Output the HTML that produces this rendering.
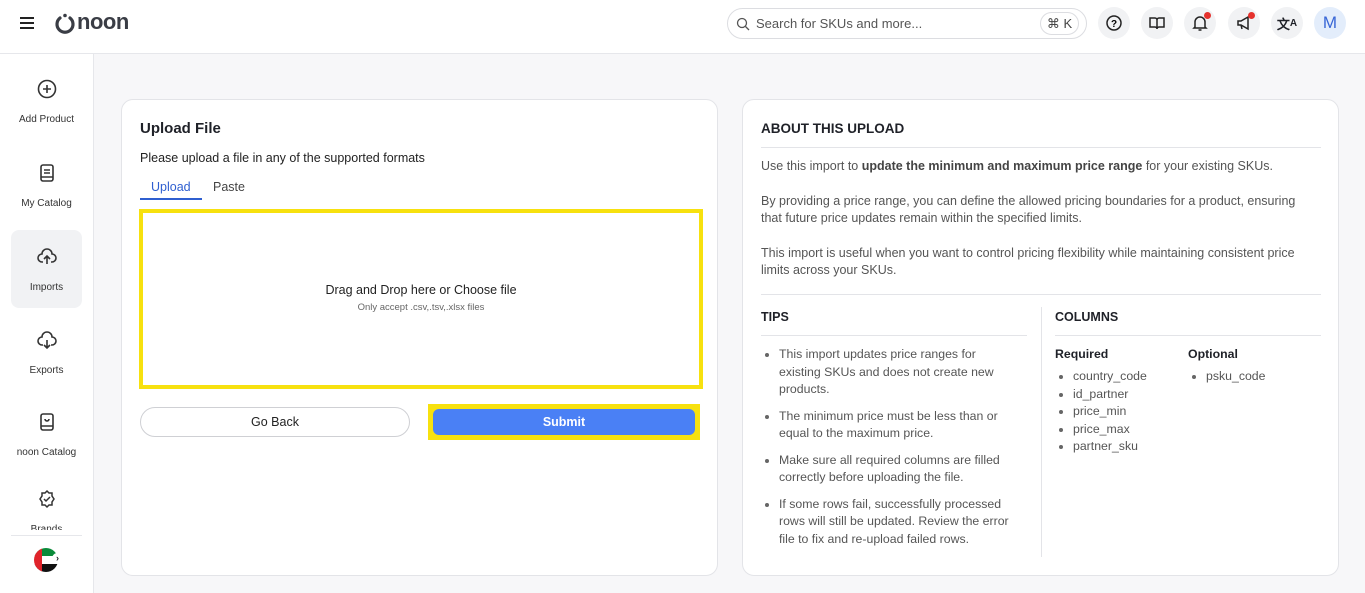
<!DOCTYPE html>
<html><head><meta charset="utf-8"><style>
*{box-sizing:border-box;margin:0;padding:0}
body{width:1365px;height:593px;overflow:hidden;font-family:"Liberation Sans",sans-serif;background:#f7f7f9;color:#1f2128;position:relative}
.a{position:absolute}
.hdr{left:0;top:0;width:1365px;height:54px;background:#fff;border-bottom:1px solid #e6e7eb}
.side{left:0;top:54px;width:94px;height:539px;background:#fff;border-right:1px solid #e6e7eb}
.nav{position:absolute;left:11px;width:71px;height:78px;text-align:center;font-size:10px;color:#333}
.nav svg{display:block;margin:0 auto 14px}
.card{background:#fff;border:1px solid #e3e4e8;border-radius:12px}
.ib{position:absolute;top:7px;width:32px;height:32px;border-radius:50%;background:#f1f2f4;display:flex;align-items:center;justify-content:center}
.dot{position:absolute;width:7px;height:7px;border-radius:50%;background:#e5322d;top:5px;right:5px}
p.t{font-size:12.5px;color:#555;line-height:17.5px}
ul{list-style:none}
li{position:relative;padding-left:18px;font-size:12.3px;color:#555;line-height:17.5px}
li:before{content:"";position:absolute;left:4px;top:7px;width:4px;height:4px;border-radius:50%;background:#666}
</style></head><body>
<div class="a hdr">
 <div class="a" style="left:20px;top:17px;width:14px">
  <div style="height:2px;background:#222;margin-bottom:3px"></div><div style="height:2px;background:#222;margin-bottom:3px"></div><div style="height:2px;background:#222"></div></div>
 <svg class="a" style="left:54px;top:13px" width="22" height="22" viewBox="0 0 22 22"><path d="M6 5 A8 8 0 1 0 16 5" fill="none" stroke="#3a3d45" stroke-width="3.2" stroke-linecap="round"/><circle cx="11" cy="2.5" r="1.8" fill="#3a3d45"/></svg>
 <div class="a" style="left:77px;top:9px;font-size:22px;font-weight:bold;color:#3a3d45;letter-spacing:-0.5px">noon</div>
 <div class="a" style="left:727px;top:8px;width:360px;height:31px;border:1px solid #dcdde1;border-radius:16px">
  <svg class="a" style="left:8px;top:8px" width="14" height="14" viewBox="0 0 14 14"><circle cx="6" cy="6" r="4.5" fill="none" stroke="#555" stroke-width="1.3"/><path d="M9.5 9.5 L13 13" stroke="#555" stroke-width="1.3"/></svg>
  <div class="a" style="left:28px;top:7px;font-size:13px;color:#555">Search for SKUs and more...</div>
  <div class="a" style="left:312px;top:3px;width:39px;height:23px;border:1px solid #dcdde1;border-radius:12px;font-size:13px;color:#444;text-align:center;line-height:21px">⌘ K</div>
 </div>
 <div class="ib" style="left:1098px"><svg width="18" height="18" viewBox="0 0 18 18"><circle cx="9" cy="9" r="7" fill="none" stroke="#222" stroke-width="1.5"/><text x="9" y="13" font-size="10" font-weight="bold" text-anchor="middle" font-family="Liberation Sans">?</text></svg></div>
 <div class="ib" style="left:1141px"><svg width="18" height="18" viewBox="0 0 18 18"><path d="M2 4h5a2 2 0 0 1 2 2v9a2 2 0 0 0-2-2H2zM16 4h-5a2 2 0 0 0-2 2v9a2 2 0 0 1 2-2h5z" fill="none" stroke="#222" stroke-width="1.5"/></svg></div>
 <div class="ib" style="left:1184px"><svg width="18" height="18" viewBox="0 0 18 18"><path d="M4 13V8a5 5 0 0 1 10 0v5l1 1H3zM7.5 16h3" fill="none" stroke="#222" stroke-width="1.5"/></svg><div class="dot"></div></div>
 <div class="ib" style="left:1228px"><svg width="18" height="18" viewBox="0 0 18 18"><path d="M3 7h3l7-4v12l-7-4H3zM6 11l1 4" fill="none" stroke="#222" stroke-width="1.5"/></svg><div class="dot"></div></div>
 <div class="ib" style="left:1271px;font-size:13px;font-weight:bold">文<span style="font-size:10px">A</span></div>
 <div class="ib" style="left:1314px;background:#e3edfb;color:#3866d6;font-size:17px">M</div>
</div>
<div class="a side">
 <div class="nav" style="top:24px"><svg width="22" height="22" viewBox="0 0 22 22"><circle cx="11" cy="11" r="8.5" fill="none" stroke="#333" stroke-width="1.6"/><path d="M11 7v8M7 11h8" stroke="#333" stroke-width="1.6"/></svg>Add Product</div>
 <div class="nav" style="top:108px"><svg width="22" height="22" viewBox="0 0 22 22"><rect x="5" y="3" width="12" height="16" rx="2" fill="none" stroke="#333" stroke-width="1.6"/><path d="M8 8h6M8 11h6M5 15h12" stroke="#333" stroke-width="1.6"/></svg>My Catalog</div>
 <div class="nav" style="top:176px;background:#f1f2f4;border-radius:8px;padding-top:16px"><svg width="22" height="22" viewBox="0 0 22 22"><path d="M7 16H6a4 4 0 0 1 0-8 5 5 0 0 1 10 0 4 4 0 0 1 0 8h-1M11 18v-8M8 13l3-3 3 3" fill="none" stroke="#333" stroke-width="1.6"/></svg>Imports</div>
 <div class="nav" style="top:275px"><svg width="22" height="22" viewBox="0 0 22 22"><path d="M7 16H6a4 4 0 0 1 0-8 5 5 0 0 1 10 0 4 4 0 0 1 0 8h-1M11 11v8M8 16l3 3 3-3" fill="none" stroke="#333" stroke-width="1.6"/></svg>Exports</div>
 <div class="nav" style="top:357px"><svg width="22" height="22" viewBox="0 0 22 22"><rect x="5" y="3" width="12" height="16" rx="2" fill="none" stroke="#333" stroke-width="1.6"/><path d="M5 15h12M9 8a2 2 0 1 0 4 0" fill="none" stroke="#333" stroke-width="1.6"/></svg>noon Catalog</div>
 <div class="nav" style="top:434px;height:42px;overflow:hidden"><svg width="22" height="22" viewBox="0 0 22 22"><path d="M11 3l2 2h3v3l2 3-2 3v3h-3l-2 2-2-2H6v-3l-2-3 2-3V5h3z" fill="none" stroke="#333" stroke-width="1.5"/><path d="M8 11l2 2 4-4" fill="none" stroke="#333" stroke-width="1.5"/></svg>Brands</div>
 <div class="a" style="left:11px;top:481px;width:71px;height:1px;background:#e6e7eb"></div>
 <div class="a" style="left:34px;top:494px;width:24px;height:24px;border-radius:50%;overflow:hidden;background:linear-gradient(#0a8a3a 0 33%,#fff 33% 66%,#111 66%)"><div style="width:8px;height:24px;background:#e0242b"></div></div>
 <div class="a" style="left:52px;top:499px;width:11px;height:11px;border-radius:50%;background:#fff;font-size:9px;line-height:11px;text-align:center;font-weight:bold">›</div>
</div>

<div class="a card" style="left:121px;top:99px;width:597px;height:477px">
 <div class="a" style="left:18px;top:20px;font-size:15px;font-weight:bold">Upload File</div>
 <div class="a" style="left:18px;top:51px;font-size:12.5px;color:#222">Please upload a file in any of the supported formats</div>
 <div class="a" style="left:29px;top:80px;font-size:12.5px;color:#2f5fd0">Upload</div>
 <div class="a" style="left:18px;top:98px;width:62px;height:2px;background:#2f5fd0"></div>
 <div class="a" style="left:91px;top:80px;font-size:12.5px;color:#444">Paste</div>
 <div class="a" style="left:17px;top:109px;width:564px;height:180px;border:4px solid #f7e10f"></div>
 <div class="a" style="left:17px;top:183px;width:564px;text-align:center;font-size:12.5px;color:#222">Drag and Drop here or Choose file</div>
 <div class="a" style="left:17px;top:202px;width:564px;text-align:center;font-size:9.5px;color:#666">Only accept .csv,.tsv,.xlsx files</div>
 <div class="a" style="left:18px;top:307px;width:270px;height:30px;border:1px solid #cfd0d4;border-radius:15px;text-align:center;line-height:28px;font-size:12.5px;color:#222">Go Back</div>
 <div class="a" style="left:306px;top:304px;width:272px;height:36px;background:#f7e10f;padding:5px">
  <div style="height:26px;background:#4a80f5;border-radius:6px;color:#fff;text-align:center;line-height:26px;font-size:12.5px;font-weight:bold">Submit</div></div>
</div>

<div class="a card" style="left:742px;top:99px;width:597px;height:477px">
 <div class="a" style="left:18px;top:21px;font-size:13.5px;font-weight:bold">ABOUT THIS UPLOAD</div>
 <div class="a" style="left:18px;top:47px;width:560px;height:1px;background:#e3e4e8"></div>
 <div class="a" style="left:18px;top:58px;width:548px">
  <p class="t">Use this import to <b style="color:#444">update the minimum and maximum price range</b> for your existing SKUs.</p>
  <p class="t" style="margin-top:17px">By providing a price range, you can define the allowed pricing boundaries for a product, ensuring that future price updates remain within the specified limits.</p>
  <p class="t" style="margin-top:17px">This import is useful when you want to control pricing flexibility while maintaining consistent price limits across your SKUs.</p>
 </div>
 <div class="a" style="left:18px;top:194px;width:560px;height:1px;background:#e3e4e8"></div>
 <div class="a" style="left:18px;top:210px;font-size:12.5px;font-weight:bold">TIPS</div>
 <div class="a" style="left:18px;top:235px;width:266px;height:1px;background:#e3e4e8"></div>
 <div class="a" style="left:298px;top:207px;width:1px;height:250px;background:#e3e4e8"></div>
 <ul class="a" style="left:18px;top:246px;width:248px">
  <li>This import updates price ranges for existing SKUs and does not create new products.</li>
  <li style="margin-top:9px">The minimum price must be less than or equal to the maximum price.</li>
  <li style="margin-top:9px">Make sure all required columns are filled correctly before uploading the file.</li>
  <li style="margin-top:9px">If some rows fail, successfully processed rows will still be updated. Review the error file to fix and re-upload failed rows.</li>
 </ul>
 <div class="a" style="left:312px;top:210px;font-size:12.5px;font-weight:bold">COLUMNS</div>
 <div class="a" style="left:312px;top:235px;width:266px;height:1px;background:#e3e4e8"></div>
 <div class="a" style="left:312px;top:247px;font-size:12.3px;font-weight:bold">Required</div>
 <ul class="a" style="left:312px;top:268px">
  <li>country_code</li><li>id_partner</li><li>price_min</li><li>price_max</li><li>partner_sku</li></ul>
 <div class="a" style="left:445px;top:247px;font-size:12.3px;font-weight:bold">Optional</div>
 <ul class="a" style="left:445px;top:268px"><li>psku_code</li></ul>
</div>
</body></html>
